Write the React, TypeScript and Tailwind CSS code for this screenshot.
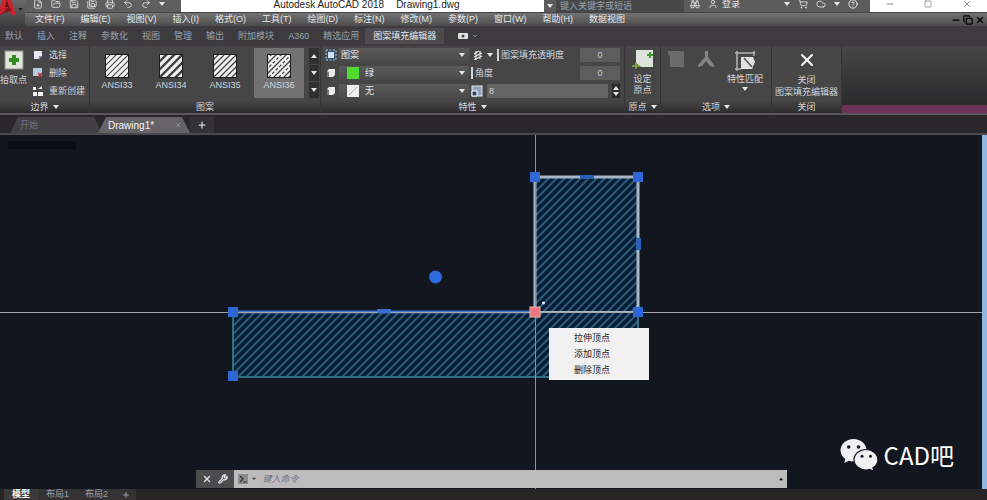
import type { ReactNode } from 'react';
import {
  Binoculars,
  ChevronDown,
  Cloud,
  CircleHelp,
  FilePlus,
  FolderOpen,
  Minus,
  Plus,
  Printer,
  Redo2,
  Save,
  SaveAll,
  ShoppingCart,
  Square,
  Copy,
  Undo2,
  User,
  Wrench,
  X,
} from 'lucide-react';

const menus = [
  '文件(F)',
  '编辑(E)',
  '视图(V)',
  '插入(I)',
  '格式(O)',
  '工具(T)',
  '绘图(D)',
  '标注(N)',
  '修改(M)',
  '参数(P)',
  '窗口(W)',
  '帮助(H)',
  '数据视图',
];

const ribbonTabs = ['默认', '插入', '注释', '参数化', '视图', '管理', '输出', '附加模块', 'A360', '精选应用'];

const patterns = [
  { name: 'ANSI33', step: 6, stroke: 1.6 },
  { name: 'ANSI34', step: 8, stroke: 3.6 },
  { name: 'ANSI35', step: 6, stroke: 1.8 },
  { name: 'ANSI36', step: 5, stroke: 1.8 },
];

function Caret({ up = false }: { up?: boolean }) {
  return (
    <svg viewBox="0 0 6 4" className="w-1.5 h-1 shrink-0 fill-gray-200">
      <path d={up ? 'M0 4h6L3 0z' : 'M0 0h6L3 4z'} />
    </svg>
  );
}

function AppLogo() {
  return (
    <button aria-label="应用程序菜单" className="w-[25px] h-[26px] shrink-0 flex bg-linear-to-b from-[#6a6a6a] to-[#3d3d3d]">
      <svg viewBox="0 0 25 26" className="w-[25px] h-[26px]">
        <path d="M4 -4h6l6 19h-5l-1-4H4l-2 4h-5z" fill="#c9232d" />
        <path d="M7 0l2 7H5z" fill="#5d1418" />
        <path d="M-1 15l6-4 1-3 4-1 2 4-5 1z" fill="#8d131c" />
        <path d="M18 8h5l-2.500 3z" fill="#222" />
      </svg>
    </button>
  );
}

function TitleBar() {
  const icon = 'w-2.5 h-2.5';
  return (
    <div className="flex h-3 overflow-hidden bg-white text-[#222]">
      <div className="flex items-center gap-2 w-[156px] shrink-0 pl-2 pb-1 bg-[#5f5f5f] text-gray-200">
        <FilePlus className={icon} />
        <FolderOpen className={icon} />
        <Save className={icon} />
        <SaveAll className={icon} />
        <Printer className={icon} />
        <Undo2 className={icon} />
        <Redo2 className={icon} />
        <Caret />
      </div>
      <h1 className="flex-1 flex items-start justify-center gap-3 pl-2 text-[10px] leading-[10px] whitespace-nowrap">
        <span>Autodesk AutoCAD 2018</span>
        <span>Drawing1.dwg</span>
      </h1>
      <div className="flex items-center w-[326px] shrink-0 bg-[#5c5c5c] text-gray-200">
        <span className="flex w-3 justify-center"><Caret /></span>
        <input
          aria-label="搜索"
          placeholder="键入关键字或短语"
          className="w-32 h-3 px-1 bg-[#484848] text-[9px] leading-[11px] placeholder:text-gray-400"
        />
        <div className="flex flex-1 items-center gap-2 pl-1.5 pb-1">
          <Binoculars className={icon} />
          <button className="flex items-center gap-1 text-[9px] leading-[9px]">
            <User className={icon} />
            登录
          </button>
        </div>
        <div className="flex items-center gap-2 pr-3 pb-1">
          <Caret />
          <ShoppingCart className={icon} />
          <Cloud className={icon} />
          <Caret />
          <CircleHelp className={`${icon} text-white`} />
        </div>
      </div>
      <div className="flex items-center justify-around w-[117px] shrink-0 pb-1 text-gray-500">
        <Minus className={icon} />
        <Square className="w-2 h-2" />
        <X className={icon} />
      </div>
    </div>
  );
}

function MenuBar() {
  return (
    <nav className="flex items-center justify-between h-[14px] pl-2.5 pr-0.5 border-t border-[#444] bg-linear-to-b from-[#737373] to-[#4c4c4c]">
      <div className="flex gap-4 text-gray-200">
        {menus.map((m) => (
          <button key={m} className="whitespace-nowrap">{m}</button>
        ))}
      </div>
      <div className="flex gap-0.5 text-black">
        <Minus className="w-2.5 h-2.5" strokeWidth={3} />
        <Copy className="w-2.5 h-2.5" strokeWidth={3} />
        <X className="w-2.5 h-2.5" strokeWidth={3} />
      </div>
    </nav>
  );
}

function Panel({ title, className, caret, children }: { title: string; className: string; caret?: boolean; children: ReactNode }) {
  return (
    <section className={`flex flex-col shrink-0 border-r border-[#363436] bg-[#464646] ${className}`}>
      <div className="flex flex-1">{children}</div>
      <h2 className="flex items-center justify-center gap-1 h-3 bg-linear-to-b from-[#464646] to-[#2e2b2d] text-gray-300">
        {title}
        {caret && <Caret />}
      </h2>
    </section>
  );
}

function HatchSwatch({ step, stroke }: { step: number; stroke: number }) {
  const lines = Array.from({ length: 10 }, (_, i) => i * step);
  return (
    <svg viewBox="0 0 24 24" className="w-6 h-6">
      <rect width="24" height="24" fill="#1d1d1d" />
      <rect x="1" y="1" width="22" height="22" fill="#f1f1f1" />
      <svg x="1" y="1" width="22" height="22" viewBox="0 0 22 22">
        {lines.map((n, i) => (
          <line
            key={n}
            x1={n - 1}
            y1="-1"
            x2="-1"
            y2={n - 1}
            stroke="#444"
            strokeWidth={stroke * 0.7}
            strokeDasharray={step === 5 && i % 2 ? '3 2' : undefined}
          />
        ))}
      </svg>
    </svg>
  );
}

function BoundaryPanel() {
  return (
    <Panel title="边界" caret className="w-[90px]">
      <button className="flex flex-col items-center gap-1 w-[27px] pt-1">
        <svg viewBox="0 0 20 20" className="w-5 h-5">
          <rect x="1" y="1" width="18" height="18" fill="#dfe5da" stroke="#8a8f86" />
          <path d="M8 5h4v3h3v4h-3v3H8v-3H5V8h3z" fill="#2f8a24" />
        </svg>
        <span className="whitespace-nowrap">拾取点</span>
      </button>
      <div className="flex flex-col gap-1 pl-1.5 pt-0.5">
        <button className="flex items-center gap-1.5 h-[14px]">
          <svg viewBox="0 0 10 10" className="w-2.5 h-2.5"><path d="M1 1h8v5L6 9H1z" fill="#e6e6ee" /><path d="M6 9V6h3z" fill="#7d7d90" /></svg>
          选择
        </button>
        <button className="flex items-center gap-1.5 h-[14px]">
          <svg viewBox="0 0 10 10" className="w-2.5 h-2.5"><path d="M0 0h9v8H0z" fill="#b8cbe0" /><path d="M5 5l4 4M9 5L5 9" stroke="#b3313a" strokeWidth="1.500" /></svg>
          删除
        </button>
        <button className="flex items-center gap-1.5 h-[14px] whitespace-nowrap">
          <svg viewBox="0 0 10 10" className="w-2.5 h-2.5 fill-gray-100"><path d="M0 1h3v3H0zM0 6h4v4H0zM5 6h5v4H5zM5 3l4-3v3z" /></svg>
          重新创建
        </button>
      </div>
    </Panel>
  );
}

function PatternPanel() {
  return (
    <Panel title="图案" className="w-[231px]">
      <div className="flex gap-1 pl-0.5 pt-0.5">
        {patterns.map((p) => (
          <button
            key={p.name}
            className={`flex flex-col items-center gap-0.5 w-[50px] h-[50px] pt-1.5 ${p.name === 'ANSI36' ? 'bg-[#717171]' : ''}`}
          >
            <HatchSwatch step={p.step} stroke={p.stroke} />
            <span className="leading-[11px]">{p.name}</span>
          </button>
        ))}
      </div>
      <div className="flex flex-col gap-px ml-auto pt-0.5 pr-px">
        <button aria-label="上一行" className="flex items-center justify-center w-2.5 h-4 bg-[#303030]"><Caret up /></button>
        <button aria-label="下一行" className="flex items-center justify-center w-2.5 h-4 bg-[#303030]"><Caret /></button>
        <button aria-label="展开" className="flex items-center justify-center w-2.5 h-4 bg-[#303030]"><Caret /></button>
      </div>
    </Panel>
  );
}

function PropertySelect({ label, value, swatch, icon }: { label: string; value: string; swatch?: ReactNode; icon: ReactNode }) {
  return (
    <div className="flex items-center gap-0.5">
      {icon}
      <div className="relative flex items-center w-[130px] h-[14px] bg-linear-to-b from-[#5a5a5a] to-[#4a4a4a]">
        {swatch}
        <select aria-label={label} className={`flex-1 h-[14px] appearance-none text-gray-200 ${swatch ? 'pl-1.5' : 'pl-0.5'}`}>
          <option>{value}</option>
        </select>
        <span className="absolute right-1 top-[5px] pointer-events-none"><Caret /></span>
      </div>
    </div>
  );
}

function PropertiesPanel() {
  const white = (
    <svg viewBox="0 0 12 12" className="w-3 h-3"><path d="M4 2h6v6L8 10H2V4z" fill="#ececec" /><path d="M2 4l2 1v5H2z" fill="#777" /></svg>
  );
  return (
    <Panel title="特性" caret className="w-[304px]">
      <div className="flex flex-col gap-1 pl-1 pt-0.5">
        <PropertySelect
          label="图案填充类型"
          value="图案"
          icon={
            <svg viewBox="0 0 12 12" className="w-3 h-3"><rect x="1" y="1" width="10" height="10" fill="#33536c" stroke="#a9c7dc" strokeDasharray="2 1.500" /><rect x="3" y="3" width="6" height="6" fill="#d5e3ee" /></svg>
          }
        />
        <PropertySelect
          label="图案填充颜色"
          value="绿"
          icon={white}
          swatch={<span className="w-3 h-3 ml-2 shrink-0 bg-[#4fdc2f]" />}
        />
        <PropertySelect
          label="背景色"
          value="无"
          icon={white}
          swatch={
            <svg viewBox="0 0 12 12" className="w-3 h-3 ml-2 shrink-0"><rect width="12" height="12" fill="#eee" /><path d="M2 10l8-8" stroke="#aaa" /></svg>
          }
        />
      </div>
      <div className="flex flex-col flex-1 gap-1 pl-0.5 pr-1 pt-0.5">
        <div className="flex items-center gap-1 h-[14px]">
          <svg viewBox="0 0 10 10" className="w-2.5 h-2.5 ml-0.5 stroke-gray-200"><path d="M1 4l5-3M1 7l8-4M1 10l8-4M3 1v9M7 1v8" strokeWidth="1.200" /></svg>
          <Caret />
          <label htmlFor="opacity" className="flex-1 pl-0.5 border-l-2 border-gray-300 whitespace-nowrap leading-[12px]">图案填充透明度</label>
          <input id="opacity" defaultValue="0" className="w-10 h-[14px] bg-[#5d5d5d] text-center" />
        </div>
        <div className="flex items-center h-[14px]">
          <label htmlFor="angle" className="flex-1 pl-0.5 border-l-2 border-gray-300 leading-[12px]">角度</label>
          <input id="angle" defaultValue="0" className="w-10 h-[14px] bg-[#5d5d5d] text-center" />
        </div>
        <div className="flex items-center gap-1 h-[14px]">
          <svg viewBox="0 0 12 12" className="w-3 h-3"><rect x="1" y="1" width="10" height="10" fill="#8fa6bd" stroke="#dfe8f0" /><path d="M1 6h5v5H1z" fill="#2f4660" stroke="#fff" /></svg>
          <input aria-label="比例" defaultValue="8" className="flex-1 min-w-0 h-[14px] px-0.5 bg-[#646464]" />
          <span className="flex flex-col gap-0.5 justify-center w-2 h-[14px] bg-[#2b2b2b] items-center"><Caret up /><Caret /></span>
        </div>
      </div>
    </Panel>
  );
}

function Ribbon() {
  return (
    <div className="flex h-[69px] border-b-2 border-[#5a585a] bg-[#464646] text-gray-300">
      <BoundaryPanel />
      <PatternPanel />
      <PropertiesPanel />
      <Panel title="原点" caret className="w-9">
        <button className="flex flex-col items-center gap-1 w-full pt-0.5 leading-[11px]">
          <svg viewBox="0 0 22 22" className="w-[22px] h-[22px] shrink-0">
            <path d="M4 2h17v17H9l-5-4z" fill="#dde4dc" />
            <path d="M15 7h6M18 4v6" stroke="#3f9a2f" strokeWidth="2" />
            <path d="M0 18h8M4 15v6" stroke="#8fae3c" strokeWidth="1.500" />
          </svg>
          <span>设定<br />原点</span>
        </button>
      </Panel>
      <Panel title="选项" caret className="w-[111px]">
        <div className="flex items-start gap-3 pl-1.5 pt-1">
          <button disabled aria-label="关联">
            <svg viewBox="0 0 18 18" className="w-[18px] h-[18px] fill-[#6b6b6b]"><path d="M1 1h16v16H3V6L1 5z" /></svg>
          </button>
          <button disabled aria-label="注释性">
            <svg viewBox="0 0 18 18" className="w-[18px] h-[18px] fill-[#858585]"><path d="M8 1h3v6l6 8v2l-4-1-4-5-4 5-4 1v-2l7-8z" /></svg>
          </button>
          <button className="flex flex-col items-center gap-0.5">
            <svg viewBox="0 0 22 22" className="w-[22px] h-[22px]">
              <path d="M1 3h20M3 1v20M1 19h6M20 1v5" stroke="#b5b5b5" strokeWidth="1.500" />
              <path d="M7 7h12l2 5-3 7H7z" fill="#e2e2e2" />
              <path d="M10 8l8 9" stroke="#555" strokeWidth="1.500" />
            </svg>
            <span className="leading-[11px] whitespace-nowrap">特性匹配</span>
            <Caret />
          </button>
        </div>
      </Panel>
      <Panel title="关闭" className="w-[70px]">
        <button className="flex flex-col items-center gap-1 w-full pt-1 leading-[12px]">
          <X className="w-5 h-5 text-gray-100" strokeWidth={2.5} />
          <span className="whitespace-nowrap">关闭<br />图案填充编辑器</span>
        </button>
      </Panel>
      <div className="flex-1 border-b-8 border-[#6b3258] bg-linear-to-b from-[#464646] to-[#2b2b2d]" />
    </div>
  );
}

function FileTabs() {
  const shape = '[clip-path:polygon(8px_0,calc(100%-8px)_0,100%_100%,0_100%)]';
  return (
    <div className="flex items-end h-5 pl-2.5 border-b-2 border-[#4b494b] bg-[#29272a]">
      <button className={`w-[92px] h-4 pl-2.5 text-left bg-[#424042] text-gray-500 ${shape}`}>开始</button>
      <button className={`flex items-center justify-between w-[92px] h-4 pl-2.5 pr-2 -ml-1 bg-[#656365] text-[10px] text-gray-100 ${shape}`}>
        Drawing1*
        <X className="w-2 h-2 text-gray-400" />
      </button>
      <button aria-label="新图形" className="flex items-center justify-center w-6 h-4 bg-[#343234] text-gray-300">
        <Plus className="w-2.5 h-2.5" strokeWidth={3} />
      </button>
    </div>
  );
}

function Grip({ x, y, fill = '#2f68d6' }: { x: number; y: number; fill?: string }) {
  return <rect x={x - 5} y={y - 5} width="10" height="10" fill={fill} />;
}

function Drawing() {
  return (
    <svg className="absolute inset-0 w-full h-full">
      <defs>
        <pattern id="hatch" width="8" height="8" patternUnits="userSpaceOnUse">
          <rect width="8" height="8" fill="#071d35" />
          <path d="M-2 10L10 -2M-2 2L2 -2M6 10L10 6" stroke="#2b5975" strokeWidth="2.200" />
        </pattern>
      </defs>
      <path d="M535 42H638V242H233V177H535z" fill="url(#hatch)" />
      <path d="M233 177V242H638V177" fill="none" stroke="#2f7080" strokeWidth="2" />
      <path d="M233 177H535" stroke="#3f74d0" strokeWidth="3" />
      <path d="M535 177V42H638V177" fill="none" stroke="#a9b7c8" strokeWidth="3" />
      <path d="M535 177H638" stroke="#a9b7c8" strokeWidth="2" />
      <line x1="0" x2="100%" y1="177.500" y2="177.500" stroke="#a0a5ac" />
      <line x1="535.500" x2="535.500" y1="0" y2="100%" stroke="#8d9299" />
      <rect x="580" y="40" width="14" height="4" fill="#2a5fb8" />
      <rect x="636" y="103" width="5" height="12" fill="#2a5fb8" />
      <rect x="377" y="174" width="14" height="4" fill="#3a6fd0" />
      <Grip x={535} y={42} />
      <Grip x={638} y={42} />
      <Grip x={638} y={177} />
      <Grip x={233} y={177} />
      <Grip x={233} y={241} />
      <Grip x={535} y={177} fill="#ef7480" />
      <rect x="530" y="172" width="10" height="10" fill="none" stroke="#e8b7a0" />
      <circle cx="543.500" cy="168" r="1.500" fill="#e6edf5" />
      <circle cx="435.500" cy="142" r="6.500" fill="#2f6ae0" />
    </svg>
  );
}

function WeChatMark() {
  return (
    <svg viewBox="0 0 38 34" className="w-[38px] h-[34px]">
      <path d="M13.500 1C6.300 1 0.500 6 0.500 12.300c0 3.600 1.900 6.700 4.900 8.800L4.200 25l4.600-2.300c1.500.400 3 .700 4.700.700 7.200 0 13-5 13-11.100S20.700 1 13.500 1z" fill="#eef0f1" />
      <path d="M26 11.500c-6.600 0-12 4.600-12 10.300s5.400 10.200 12 10.200c1.400 0 2.700-.200 3.900-.600L34 33.500l-1.100-3.500c3-1.900 5-4.800 5-8.200 0-5.700-5.300-10.300-11.900-10.300z" fill="#eef0f1" stroke="#12161f" strokeWidth="1.200" />
      <g fill="#12161f">
        <circle cx="8.700" cy="9" r="1.800" />
        <circle cx="18.500" cy="9" r="1.800" />
        <circle cx="22" cy="18.300" r="1.500" />
        <circle cx="30.500" cy="18.300" r="1.500" />
      </g>
    </svg>
  );
}

function Canvas() {
  return (
    <main className="relative flex-1 min-h-0 bg-[#12161f] border-r-[5px] border-[#8fb6dc] overflow-hidden">
      <Drawing />
      <div className="absolute left-2 top-1.5 w-[68px] h-2 bg-[#0a0e14]" />
      <div role="menu" className="absolute left-[549px] top-[193px] flex flex-col w-[100px] py-0.5 bg-[#f1f1f1] text-[#222]">
        {['拉伸顶点', '添加顶点', '删除顶点'].map((item) => (
          <button key={item} role="menuitem" className="h-4 pl-[25px] text-left">{item}</button>
        ))}
      </div>
      <div className="absolute right-7 bottom-[17px] flex items-center gap-1.5 text-white">
        <WeChatMark />
        <span className="font-['Noto_Sans_CJK_SC',sans-serif] text-2xl leading-[34px]">CAD吧</span>
      </div>
      <div className="absolute left-[20%] right-[195px] bottom-px flex h-[18px]">
        <div className="flex items-center justify-center gap-1.5 w-[38px] bg-[#4c4c4e] text-gray-200">
          <X className="w-2.5 h-2.5" strokeWidth={3} />
          <Wrench className="w-2.5 h-2.5" strokeWidth={3} />
        </div>
        <label htmlFor="command" className="flex items-center gap-1 pl-1 bg-[#bcbcbc]">
          <svg viewBox="0 0 10 10" className="w-2.5 h-2.5"><rect width="10" height="10" fill="#8d8d8d" /><path d="M2 2l3 3-3 3M5 8h4" fill="none" stroke="#333" strokeWidth="1.200" /></svg>
          <svg viewBox="0 0 6 4" className="w-1 h-1 fill-[#444]"><path d="M0 0h6L3 4z" /></svg>
        </label>
        <input id="command" placeholder="键入命令" className="flex-1 min-w-0 pl-1.5 bg-[#bcbcbc] italic placeholder:text-gray-500" />
        <button aria-label="历史记录" className="flex items-center pr-1 bg-[#bcbcbc]">
          <svg viewBox="0 0 6 4" className="w-1 h-1 fill-black"><path d="M0 4h6L3 0z" /></svg>
        </button>
      </div>
    </main>
  );
}

export default function App() {
  return (
    <div className="flex flex-col h-screen overflow-hidden bg-[#262425] font-['Liberation_Sans','Noto_Sans_CJK_SC',sans-serif] text-[9px] leading-[13px]">
      <header className="flex">
        <AppLogo />
        <div className="flex-1 min-w-0">
          <TitleBar />
          <MenuBar />
        </div>
      </header>
      <div className="flex items-center h-5 pl-[5px] gap-3.5 bg-[#3d3b3d] text-gray-400">
        {ribbonTabs.map((t) => (
          <button key={t} className="whitespace-nowrap">{t}</button>
        ))}
        <button className="h-4 px-2 -ml-2 bg-[#4d4b4d] text-gray-200 whitespace-nowrap">图案填充编辑器</button>
        <button aria-label="最小化功能区" className="flex items-center gap-1">
          <svg viewBox="0 0 10 6" className="w-2.5 h-1.5"><rect width="10" height="6" rx="1" fill="#e0e0e0" /><circle cx="5" cy="3" r="1.500" fill="#444" /></svg>
          <ChevronDown className="w-1.5 h-1.5" strokeWidth={4} />
        </button>
      </div>
      <Ribbon />
      <FileTabs />
      <Canvas />
      <footer className="flex items-center h-[11px] pl-1 bg-[#262425] text-gray-400">
        <button className="h-[11px] px-2 bg-[#3b393a] leading-[11px] font-bold text-white">模型</button>
        <button className="h-[11px] px-2 bg-[#343233] leading-[11px]">布局1</button>
        <button className="h-[11px] px-2 bg-[#343233] leading-[11px]">布局2</button>
        <button aria-label="新建布局" className="flex items-center justify-center w-5 h-[11px] bg-[#343233]">
          <Plus className="w-2 h-2" strokeWidth={3} />
        </button>
      </footer>
    </div>
  );
}
